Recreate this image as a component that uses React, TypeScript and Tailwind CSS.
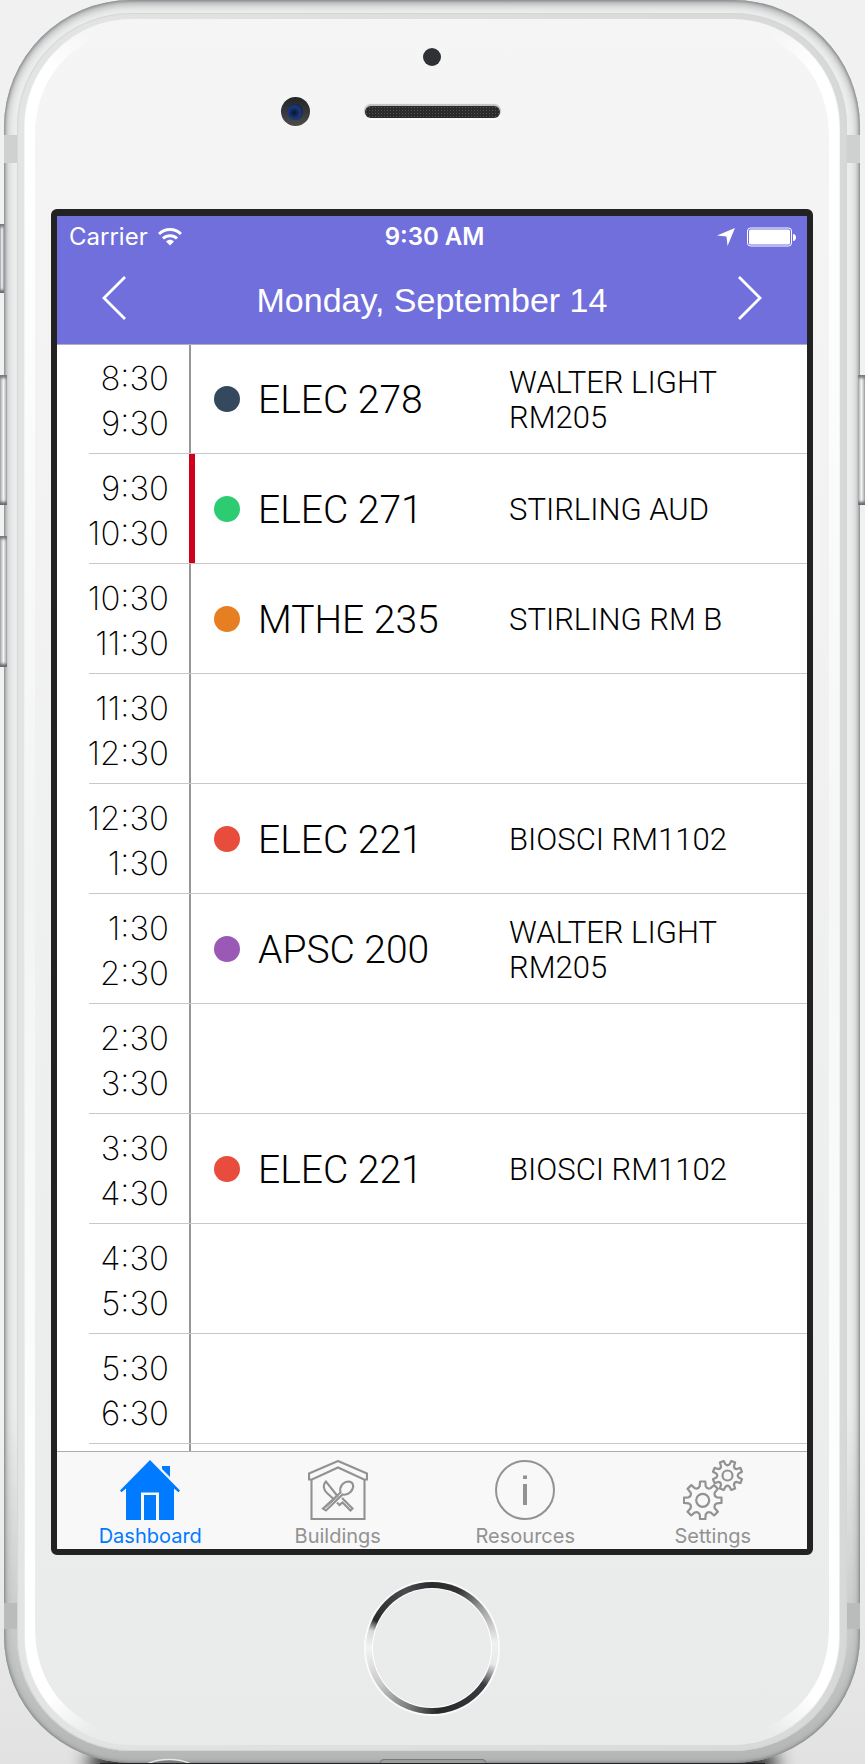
import type { ReactNode } from "react";

type Slot = {
  start: string;
  end: string;
  course?: string;
  place?: string;
  dot?: string;
  current?: boolean;
};

const slots: Slot[] = [
  { start: "8:30", end: "9:30", course: "ELEC 278", place: "WALTER LIGHT RM205", dot: "bg-[#34495e]" },
  { start: "9:30", end: "10:30", course: "ELEC 271", place: "STIRLING AUD", dot: "bg-[#2ecc71]", current: true },
  { start: "10:30", end: "11:30", course: "MTHE 235", place: "STIRLING RM B", dot: "bg-[#e67e22]" },
  { start: "11:30", end: "12:30" },
  { start: "12:30", end: "1:30", course: "ELEC 221", place: "BIOSCI RM1102", dot: "bg-[#e74c3c]" },
  { start: "1:30", end: "2:30", course: "APSC 200", place: "WALTER LIGHT RM205", dot: "bg-[#9b59b6]" },
  { start: "2:30", end: "3:30" },
  { start: "3:30", end: "4:30", course: "ELEC 221", place: "BIOSCI RM1102", dot: "bg-[#e74c3c]" },
  { start: "4:30", end: "5:30" },
  { start: "5:30", end: "6:30" },
];

function gearPath(cx: number, cy: number, outer: number, turn: number) {
  const at = (r: number, deg: number) => {
    const a = ((deg + turn) * Math.PI) / 180;
    return `${(cx + r * Math.sin(a)).toFixed(2)} ${(cy - r * Math.cos(a)).toFixed(2)}`;
  };
  let d = "";
  for (let i = 0; i < 8; i++) {
    const m = i * 45;
    d += `${i === 0 ? "M" : "L"}${at(outer, m - 8)}L${at(outer, m + 8)}L${at(outer * 0.76, m + 12)}`;
    d += `Q${at(outer * 0.62, m + 22.5)} ${at(outer * 0.76, m + 33)}`;
  }
  return d + "Z";
}

function HouseIcon() {
  return (
    <svg viewBox="0 0 60 60" className="size-[60px]" aria-hidden="true">
      <path fill="currentColor" d="M30 0 60 30.5 58.5 32.3 54 28.5V60H39V32.5H21V60H6V28.5L1.5 32.3 0 30.5Z" />
      <path fill="currentColor" d="M42 6h8v11l-8-8z" />
      <path fill="currentColor" d="M24 35h12v25H24z" />
    </svg>
  );
}

function CafeteriaIcon() {
  return (
    <svg viewBox="0 0 60 60" className="size-[60px]" fill="none" stroke="currentColor" strokeWidth="2.1" aria-hidden="true">
      <path d="M30 1 59 13.5V19.5H56L30 7.5 4 19.5H1V13.5Z" />
      <path d="M3.5 19.5V59H56.5V19.5" />
      <path d="M29 35.5 18 21.5C14.5 25 15.5 30 19 33L25 38.5M34 38 44.5 48.5 42.5 50.5 34.5 42.5 31.5 45 29 42.5" />
      <path d="M15 48.5 32.5 32.5C31 27 35 21.5 41 21.5 46 22 46.5 28 42.5 32 40 34.5 37 35 34.5 34.5L18 50.5Z" />
      <path d="M17.5 48 31 35.5" strokeWidth="1" />
    </svg>
  );
}

function InfoIcon() {
  return (
    <svg viewBox="0 0 60 60" className="size-[60px]" aria-hidden="true">
      <circle cx="30" cy="30" r="29" fill="none" stroke="currentColor" strokeWidth="2" />
      <path fill="currentColor" d="M28 15.5h4v3.5h-4zM28 24h4v21h-4z" />
    </svg>
  );
}

function GearsIcon() {
  return (
    <svg viewBox="0 0 60 60" className="size-[60px]" fill="none" stroke="currentColor" strokeWidth="2.2" strokeLinejoin="round" aria-hidden="true">
      <path d={gearPath(19.7, 40.3, 19, 0)} />
      <circle cx="19.7" cy="40.3" r="6.5" />
      <path d={gearPath(44.5, 15.5, 15, 22.5)} />
      <circle cx="44.5" cy="15.5" r="5" />
    </svg>
  );
}

const tabs: { label: string; icon: ReactNode; active?: boolean }[] = [
  { label: "Dashboard", icon: <HouseIcon />, active: true },
  { label: "Buildings", icon: <CafeteriaIcon /> },
  { label: "Resources", icon: <InfoIcon /> },
  { label: "Settings", icon: <GearsIcon /> },
];

function StatusBar() {
  return (
    <div className="grid h-10 grid-cols-[1fr_auto_1fr] items-center pt-0.5 pr-[11px] pl-3 font-['Inter',sans-serif] text-2xl leading-[30px]">
      <div className="flex items-center gap-2.5">
        <span>Carrier</span>
        <svg viewBox="0 0 24 18" className="h-[18px] w-6" fill="none" stroke="currentColor" strokeWidth="3" role="img" aria-label="Wi-Fi">
          <path d="M1 6C7 0 17 0 23 6" />
          <path d="M5 10.5C9 6.7 15 6.7 19 10.5" />
          <path d="M8 13.5C10.5 11.2 13.5 11.2 16 13.5L12 17.5Z" fill="currentColor" stroke="none" />
        </svg>
      </div>
      <span className="pl-1 font-semibold">9:30 AM</span>
      <div className="flex items-center justify-end gap-3">
        <svg viewBox="0 0 18 18" className="size-[18px]" fill="currentColor" role="img" aria-label="Location in use">
          <path d="M18 0 10.5 18 9.5 8.5 0 7.5Z" />
        </svg>
        <svg viewBox="0 0 49 20" className="h-5 w-[49px]" fill="currentColor" role="img" aria-label="Battery full">
          <rect x=".5" y="1" width="44" height="18" rx="3" fill="none" stroke="currentColor" />
          <rect x="2" y="2.5" width="41" height="15" rx="1.5" />
          <path d="M46 7c4 0 4 7 0 7z" />
        </svg>
      </div>
    </div>
  );
}

function DayNav() {
  return (
    <div className="flex h-[88px] items-center justify-between px-10 pb-1">
      <button type="button" aria-label="Previous day" className="px-[5px]">
        <svg viewBox="0 0 24 46" className="h-[46px] w-6" fill="none" stroke="currentColor" strokeWidth="2.8">
          <path d="M23 2 2 23 23 44" />
        </svg>
      </button>
      <h1 className="pt-1 font-['Liberation_Sans',sans-serif] text-[34px] leading-[40px]">Monday, September 14</h1>
      <button type="button" aria-label="Next day" className="px-[5px]">
        <svg viewBox="0 0 24 46" className="h-[46px] w-6" fill="none" stroke="currentColor" strokeWidth="2.8">
          <path d="M1 2 22 23 1 44" />
        </svg>
      </button>
    </div>
  );
}

function SlotRow({ slot }: { slot: Slot }) {
  return (
    <tr>
      <td className="pl-8">
        <div className="flex h-[110px] flex-col items-end justify-center border-b border-[#c8c7cc] pt-1 pr-5 font-['Inter',sans-serif] text-[33px] leading-[45px] font-extralight whitespace-nowrap">
          <span>{slot.start}</span>
          <span>{slot.end}</span>
        </div>
      </td>
      <td className="border-b border-[#c8c7cc]">
        <div
          className={
            slot.current
              ? "flex h-[109px] items-center gap-[18px] border-l-6 border-[#d0021b] pl-[19px]"
              : "flex h-[109px] items-center gap-[18px] border-l-2 border-[#979797] pl-[23px]"
          }
        >
          {slot.course && (
            <>
              <span className={`size-[26px] rounded-full ${slot.dot}`} />
              <span className="pt-1 text-[39px] font-light">{slot.course}</span>
            </>
          )}
        </div>
      </td>
      <td className="border-b border-[#c8c7cc] pt-0.5 pr-12 text-[31px] leading-[35px] font-light">{slot.place}</td>
    </tr>
  );
}

function TabBar() {
  return (
    <nav className="flex h-[98px] border-t border-[#adadad] bg-[#f8f8f8] font-['Inter',sans-serif] text-xl">
      {tabs.map((tab) => (
        <a
          key={tab.label}
          href={`#${tab.label.toLowerCase()}`}
          className={`flex flex-1 flex-col items-center gap-[3px] pt-2 pr-px leading-[26px] ${tab.active ? "text-[#007aff]" : "text-[#929292]"}`}
        >
          {tab.icon}
          {tab.label}
        </a>
      ))}
    </nav>
  );
}

function Screen() {
  return (
    <main className="rounded-md border-x-6 border-t-7 border-b-6 border-[#222222] bg-white">
      <header className="relative z-10 bg-[#716fdc] text-white shadow-[0_1px_0_#b2b2b2]">
        <StatusBar />
        <DayNav />
      </header>
      <table className="w-full table-fixed border-separate border-spacing-0 font-['Roboto',sans-serif] text-black">
        <colgroup>
          <col className="w-[132px]" />
          <col />
          <col className="w-[298px]" />
        </colgroup>
        <tbody>
          {slots.map((slot) => (
            <SlotRow key={slot.start} slot={slot} />
          ))}
          <tr>
            <td />
            <td>
              <div className="h-[7px] border-l-2 border-[#979797]" />
            </td>
            <td />
          </tr>
        </tbody>
      </table>
      <TabBar />
    </main>
  );
}

function Crescent({ className }: { className: string }) {
  return (
    <svg viewBox="0 0 120 140" className={`absolute h-[140px] w-[120px] ${className}`} aria-hidden="true">
      <defs>
        <linearGradient id="shine" gradientUnits="userSpaceOnUse" x1="20" y1="60" x2="60" y2="6">
          <stop offset="0.2" stopColor="#fff" />
          <stop offset="1" stopColor="#fff" stopOpacity="0" />
        </linearGradient>
      </defs>
      <path fill="url(#shine)" d="M1 140V108C1 55 40 6 100 4L96 10C40 25 11 64 11 118V140Z" />
    </svg>
  );
}

function SideButton({ className }: { className: string }) {
  return (
    <div
      className={`absolute bg-linear-to-r from-[#a6a8ab] via-[#f4f4f5] to-[#9fa1a5] shadow-[inset_0_5px_3px_-2px_#77797c,inset_0_-5px_3px_-2px_#66686b] ${className}`}
    />
  );
}

function PhoneTop() {
  return (
    <div className="flex h-[190px] flex-col items-center gap-[31px] pt-[29px]">
      <div className="size-[18px] rounded-full bg-[#2f3135]" />
      <div className="grid w-full grid-cols-[1fr_135px_1fr] items-center">
        <div className="mr-[55px] flex size-[29px] items-center justify-center justify-self-end rounded-full bg-linear-to-b from-[#222426] to-[#4c4c4c]">
          <div className="size-4 rounded-full bg-radial-[at_45%_55%] from-[#0b1230] via-[#1c3a7c] to-[#080a12]" />
        </div>
        <div className="h-3 rounded-full bg-[#2b2b2b] bg-[radial-gradient(#555_30%,transparent_35%)] bg-size-[3px_3px] shadow-[0_-1px_1px_1px_#c0c0c2,0_1px_0_1px_#ffffff]" />
      </div>
    </div>
  );
}

function PhoneBottom() {
  return (
    <div className="flex h-[190px] items-center justify-center pb-1">
      <button
        type="button"
        aria-label="Home"
        className="size-[132px] rounded-full bg-[conic-gradient(#2b2b2d,#333335_25deg,#a0a0a0_52deg,#f0f0f0_85deg,#e8e8ea_105deg,#3a3a40_125deg,#28282a_175deg,#77787a_200deg,#c8c8ca_235deg,#f3f3f3_270deg,#d8d8da_286deg,#29292b_296deg,#4a4c50_335deg,#2b2b2d)] p-[7px] shadow-[0_0_0_2px_#fafafa]"
      >
        <span className="block size-full rounded-full bg-[#eaeceb] shadow-[0_0_0_1px_#ffffff]" />
      </button>
    </div>
  );
}

export default function App() {
  return (
    <div className="relative min-h-screen overflow-hidden bg-linear-to-b from-[#f1f1f1] from-80% to-[#e2e2e2] pr-[5px] pb-px pl-1">
      <div className="absolute inset-x-[100px] bottom-0 h-px bg-[#222222] shadow-[0_0_20px_10px_#000000]" />
      <SideButton className="top-[224px] left-0 h-[69px] w-1" />
      <div className="relative rounded-[127px] bg-linear-to-b from-[#eceeed] from-80% to-[#b4b7b6] pt-[13px] pr-[13px] pb-3 pl-[13px] shadow-[inset_0_0_3px_1px_#85868a,inset_0_2px_9px_2px_#a3a5a7]">
        <div className="absolute top-[135px] left-0 h-7 w-[13px] bg-[#cfd1d0]" />
        <div className="absolute top-[135px] right-0 h-7 w-[13px] bg-[#cfd1d0]" />
        <div className="absolute bottom-[134px] left-0 h-[26px] w-[13px] bg-[#b9bcbb]" />
        <div className="absolute right-0 bottom-[134px] h-[26px] w-[13px] bg-[#b9bcbb]" />
        <svg viewBox="0 0 44 5" className="absolute bottom-0 left-[143px] h-[5px] w-11" fill="#77797b" stroke="#e6e7e7" strokeWidth="1.5" aria-hidden="true">
          <path d="M0 6C12 0 32 0 44 6" />
        </svg>
        <div className="absolute bottom-0 left-[376px] h-1 w-[106px] rounded-t-md border border-b-0 border-[#77797b] bg-[#9a9d9c]" />
        <div className="rounded-[114px] bg-linear-to-r from-[#e3e5e4] to-[#d7d8d8] px-[7px] py-1.5 shadow-[inset_0_0_1px_1px_#d3d6d5]">
          <div className="relative overflow-hidden rounded-[108px] bg-linear-to-b from-[#f5f5f5] to-[#e9ebea] px-[27px]">
            <div className="absolute top-[140px] bottom-[140px] left-px w-2.5 bg-linear-to-b from-white via-[#f2f4f4] to-white" />
            <div className="absolute top-[140px] right-px bottom-[140px] w-2.5 bg-linear-to-b from-white via-[#f6f6f6] to-white" />
            <Crescent className="top-0 left-0" />
            <Crescent className="top-0 right-0 -scale-x-100" />
            <Crescent className="bottom-0 left-0 -scale-y-100" />
            <Crescent className="right-0 bottom-0 -scale-100" />
            <PhoneTop />
            <Screen />
            <PhoneBottom />
          </div>
        </div>
      </div>
      <SideButton className="top-[375px] left-0 h-[130px] w-[7px]" />
      <SideButton className="top-[536px] left-0 h-[131px] w-[7px]" />
      <SideButton className="top-[375px] right-0 h-[130px] w-[7px]" />
    </div>
  );
}
